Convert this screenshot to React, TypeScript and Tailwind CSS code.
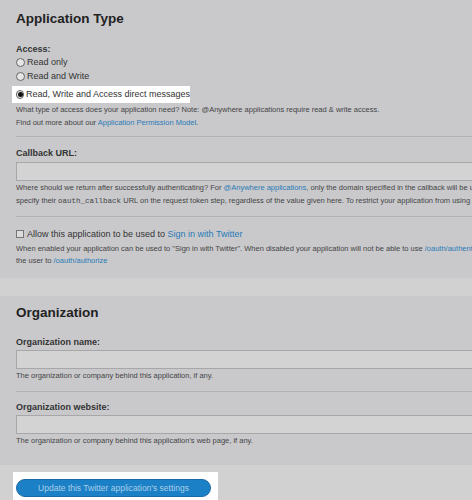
import React from 'react';

const font = { fontFamily: '"Liberation Sans", Arial, sans-serif' };

function Help({ children, lh = 'leading-[13px]' }: { children: React.ReactNode; lh?: string }) {
  return <div className={`whitespace-nowrap text-[7.5px] text-[#444] ${lh}`}>{children}</div>;
}

function Link({ children }: { children: React.ReactNode }) {
  return <span className="text-[#2a7bb6]">{children}</span>;
}

function Radio({ checked }: { checked?: boolean }) {
  return (
    <span className="mr-[2px] inline-flex h-[9px] w-[9px] items-center justify-center rounded-full border border-[#666] bg-[#e6e6e6]">
      {checked && <span className="h-[5px] w-[5px] rounded-full bg-[#111]" />}
    </span>
  );
}

function Field() {
  return <div className="mr-[-8px] h-[19px] border border-[#a7a7a9] bg-[#d3d3d3]" />;
}

export default function App() {
  return (
    <div style={font} className="h-[500px] w-[472px] overflow-hidden bg-[#d1d1d2] text-[#333]">
      <div className="h-[278px] bg-[#c9c9cc] pl-4 pt-[9px]">
        <h1 className="text-[13.5px] font-bold leading-[20px] text-[#222]">Application Type</h1>
        <div className="mt-[14px] text-[9px] font-bold leading-[12px]">Access:</div>
        <div className="flex items-center text-[9px] leading-[14px]"><Radio />Read only</div>
        <div className="flex items-center text-[9px] leading-[14px]"><Radio />Read and Write</div>
        <div className="-ml-1 mt-[3px] flex w-[178px] items-center whitespace-nowrap bg-white pl-1 text-[9px] leading-[17px]">
          <Radio checked />Read, Write and Access direct messages
        </div>
        <Help>
          What type of access does your application need? Note: @Anywhere applications require read &amp; write access.
          <br />
          Find out more about our <Link>Application Permission Model</Link>.
        </Help>
        <div className="mt-[7px] border-t border-[#b2b2b4]" />
        <div className="mt-[10px] text-[9px] font-bold leading-[12px]">Callback URL:</div>
        <div className="mt-[3px]"><Field /></div>
        <Help>
          Where should we return after successfully authenticating? For <Link>@Anywhere applications</Link>, only the domain specified in the callback will be used. OAuth 1.0a applications should explicitly
          <br />
          specify their <span style={{ fontFamily: '"Liberation Mono", monospace' }}>oauth_callback</span> URL on the request token step, regardless of the value given here. To restrict your application from using callbacks, leave this field blank.
        </Help>
        <div className="mt-[8px] border-t border-[#b2b2b4]" />
        <div className="mt-[10px] flex items-center text-[9px] leading-[14px]">
          <span className="mr-[3px] h-[8px] w-[8px] border border-[#777] bg-[#dcdcdc]" />
          Allow this application to be used to&nbsp;<Link>Sign in with Twitter</Link>
        </div>
        <div className="mt-[2px]">
          <Help lh="leading-[12px]">
            When enabled your application can be used to "Sign in with Twitter". When disabled your application will not be able to use <Link>/oauth/authenticate</Link> and must send
            <br />
            the user to <Link>/oauth/authorize</Link>
          </Help>
        </div>
      </div>

      <div className="h-[18px]" />

      <div className="h-[169px] bg-[#c9c9cc] pl-4 pt-[7px]">
        <h1 className="text-[13.5px] font-bold leading-[20px] text-[#222]">Organization</h1>
        <div className="mt-[13px] text-[9px] font-bold leading-[12px]">Organization name:</div>
        <div className="mt-[2px]"><Field /></div>
        <div className="mt-[1px]">
          <Help lh="leading-[12px]">The organization or company behind this application, if any.</Help>
        </div>
        <div className="mt-[9px] border-t border-[#b2b2b4]" />
        <div className="mt-[9px] text-[9px] font-bold leading-[12px]">Organization website:</div>
        <div className="mt-[2px]"><Field /></div>
        <div className="mt-[1px]">
          <Help lh="leading-[12px]">The organization or company behind this application's web page, if any.</Help>
        </div>
      </div>

      <div className="ml-[13px] mt-[7px] h-[28px] w-[205px] bg-white pl-[3px] pt-[7px]">
        <button className="block h-[18px] w-[195px] rounded-full border border-[#1a6aa8] bg-[#1b80c5] text-[8.5px] leading-[16px] text-[#a9cfe9]">
          Update this Twitter application's settings
        </button>
      </div>
    </div>
  );
}
